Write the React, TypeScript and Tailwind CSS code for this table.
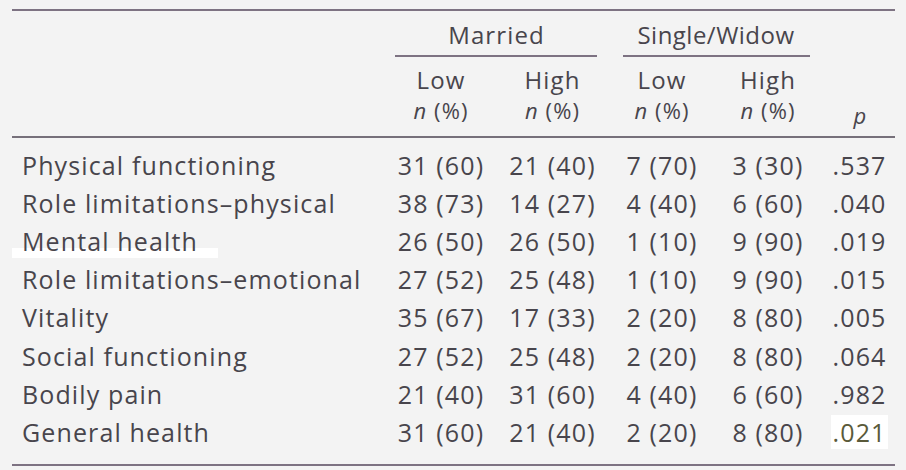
import React from "react";

const rows: [string, string, string, string, string, string][] = [
  ["Physical functioning", "31 (60)", "21 (40)", "7 (70)", "3 (30)", ".537"],
  ["Role limitations–physical", "38 (73)", "14 (27)", "4 (40)", "6 (60)", ".040"],
  ["Mental health", "26 (50)", "26 (50)", "1 (10)", "9 (90)", ".019"],
  ["Role limitations–emotional", "27 (52)", "25 (48)", "1 (10)", "9 (90)", ".015"],
  ["Vitality", "35 (67)", "17 (33)", "2 (20)", "8 (80)", ".005"],
  ["Social functioning", "27 (52)", "25 (48)", "2 (20)", "8 (80)", ".064"],
  ["Bodily pain", "21 (40)", "31 (60)", "4 (40)", "6 (60)", ".982"],
  ["General health", "31 (60)", "21 (40)", "2 (20)", "8 (80)", ".021"],
];

const grid = "grid grid-cols-[373px_112px_111px_108px_104px_75px]";

export default function App() {
  return (
    <div
      className="w-[906px] h-[470px] bg-[#f3f3f3] text-[#48454c] overflow-hidden"
      style={{ fontFamily: '"Open Sans", "DejaVu Sans", sans-serif' }}
    >
      <div className="pt-[9px] pl-[12px] w-[895px] text-[25px] leading-none font-medium tracking-[0.045em]">
        <div className="h-[2px] bg-[#7d7282]" />
        {/* group header */}
        <div className={`${grid} h-[46px]`}>
          <div />
          <div className="col-span-2 flex flex-col">
            <div className="flex-1 flex items-center justify-center pt-[4px] text-[24px]">Married</div>
            <div className="ml-[10px] mr-[11px] h-[2px] bg-[#7d7282]" />
          </div>
          <div className="col-span-2 flex flex-col">
            <div className="flex-1 flex items-center justify-center pt-[4px] pl-[4px] text-[24px] tracking-[0.02em]">Single/Widow</div>
            <div className="ml-[15px] mr-[10px] h-[2px] bg-[#7d7282]" />
          </div>
          <div />
        </div>
        {/* sub header */}
        <div className={`${grid} h-[79px] pt-[11px]`}>
          <div />
          {["Low", "High", "Low", "High"].map((t, i) => (
            <div key={i} className="flex flex-col items-center gap-[7px] text-[24px]">
              <span>{t}</span>
              <span className="text-[22px]">
                <i>n</i> (%)
              </span>
            </div>
          ))}
          <div className="flex items-end justify-center pb-[10px] pl-[6px]">
            <i className="text-[22px]">p</i>
          </div>
        </div>
        <div className="h-[2px] bg-[#76707a]" />
        {/* body */}
        <div className="pt-[8px]">
          {rows.map((r, i) => (
            <div key={i} className={`${grid} h-[38.2px] items-center whitespace-nowrap`}>
              <div className="pl-[10px]">
                <span className={i === 2 ? "bg-[linear-gradient(transparent_72%,#ffffff_72%)] pr-[20px] -ml-[10px] pl-[10px]" : ""}>
                  {r[0]}
                </span>
              </div>
              <div className="text-center">{r[1]}</div>
              <div className="text-center">{r[2]}</div>
              <div className="text-center">{r[3]}</div>
              <div className="text-center">{r[4]}</div>
              <div className="text-center pl-[4px]">
                <span className={i === 7 ? "bg-white text-[#5a5a3a] px-[2px]" : ""}>{r[5]}</span>
              </div>
            </div>
          ))}
        </div>
        <div className="mt-[12px] h-[2px] bg-[#7d7282]" />
      </div>
    </div>
  );
}
